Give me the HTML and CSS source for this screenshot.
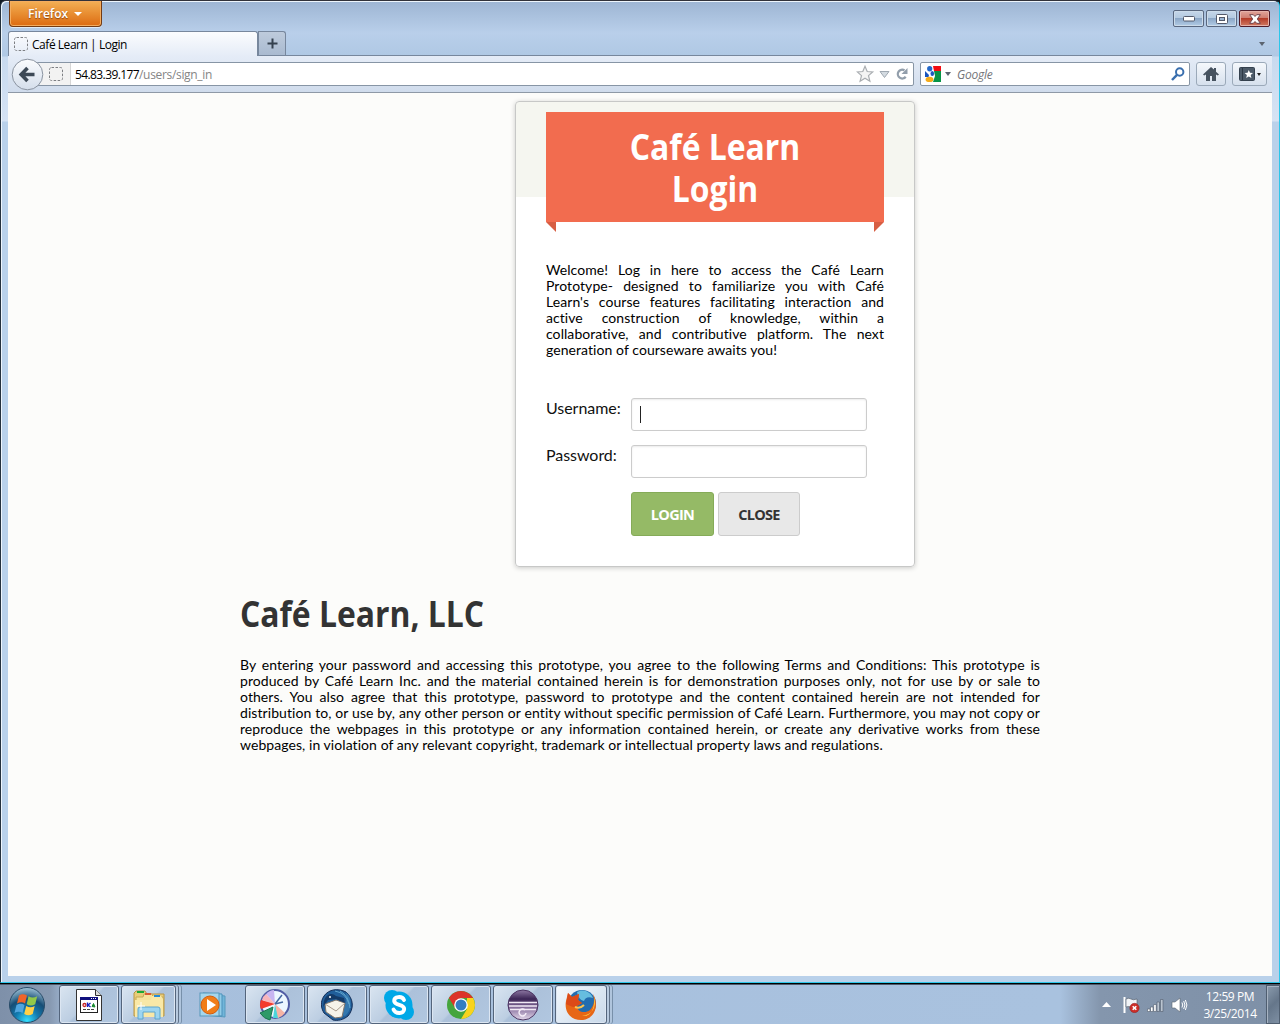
FILE: index.html
```html
<!DOCTYPE html>
<html lang="en">
<head>
<meta charset="utf-8">
<title>Café Learn | Login</title>
<link rel="stylesheet" href="styles.css">
</head>
<body>
<div class="window">
  <header class="titlebar">
    <div class="app-menu">Firefox<i class="caret light"></i></div>
    <div class="controls">
      <div class="control"><svg width="12" height="6" viewBox="0 0 12 6"><rect x=".5" y=".5" width="11" height="4.500" rx="1" fill="#fff" stroke="#53596a"/></svg></div>
      <div class="control"><svg width="12" height="10" viewBox="0 0 12 10"><rect x=".5" y=".5" width="11" height="9" rx="1" fill="#fff" stroke="#53596a"/><rect x="3.500" y="3.500" width="5" height="3" fill="#9cb6d4" stroke="#53596a"/></svg></div>
      <div class="control close"><svg width="12" height="10" viewBox="0 0 12 10"><path d="M.7.700h3.600L6 2.500 7.700.700h3.600L8.300 5l3 4.300H7.700L6 7.500 4.300 9.300H.7l3-4.300z" fill="#fff" stroke="#633a45" stroke-width=".9"/></svg></div>
    </div>
  </header>
  <div class="tabs">
    <div class="tab"><svg width="14" height="14" viewBox="0 0 14 14"><rect x=".5" y=".5" width="13" height="13" rx="2" fill="none" stroke="#7d7f83" stroke-dasharray="2.500 1.500"/></svg><span>Café Learn | Login</span></div>
    <div class="new-tab"><svg width="11" height="11" viewBox="0 0 11 11"><path d="M5.500 .5v10M.5 5.500h10" stroke="#35414f" stroke-width="2"/></svg></div>
    <i class="caret all-tabs"></i>
  </div>
  <nav class="toolbar">
    <svg class="back" width="33" height="33" viewBox="0 0 33 33"><defs><linearGradient id="bk" x2="0" y2="1"><stop stop-color="#fbfcfe"/><stop offset="1" stop-color="#d4deeb"/></linearGradient></defs><circle cx="16.500" cy="16.500" r="15.300" fill="url(#bk)" stroke="#8a93a0"/><path d="M16.500 10l-6.300 6.500 6.300 6.500M11 16.500h12.500" fill="none" stroke="#3d4956" stroke-width="3.600"/></svg>
    <div class="urlbar">
      <div class="identity"><svg width="14" height="14" viewBox="0 0 14 14"><rect x=".5" y=".5" width="13" height="13" rx="2" fill="none" stroke="#7d7f83" stroke-dasharray="2.500 1.500"/></svg></div>
      <div class="url">54.83.39.177<span>/users/sign_in</span></div>
      <svg width="56" height="18" viewBox="0 0 56 18"><path d="M9 1.300l2.200 5.200 5.500.4-4.200 3.700 1.400 5.600L9 13.200l-4.900 3 1.400-5.600L1.300 6.900l5.500-.4z" fill="#f4f4f4" stroke="#a9adb1" stroke-width="1.200"/><path d="M24 6.500h9l-4.500 6z" fill="#d4dbe1" stroke="#a0a9b2"/><path d="M48.500 5.300a4.400 4.400 0 1 0 1.200 6.500" fill="none" stroke="#929eab" stroke-width="2.300"/><path d="M51.500 3v6h-6z" fill="#929eab"/></svg>
    </div>
    <div class="search">
      <svg width="16" height="16" viewBox="0 0 16 16"><path d="M8 0h8v5H9z" fill="#f20d13"/><path d="M9 5h7v11H8l2-6z" fill="#079447"/><path d="M0 5h7l2 6H0z" fill="#fff"/><ellipse cx="4.700" cy="2.700" rx="2.600" ry="2.700" fill="#2368ca"/><path d="M0 5l4 4-.5 2H0z" fill="#1955bd"/><ellipse cx="7.300" cy="7.500" rx="1.800" ry="2.500" fill="#1a56c1"/><ellipse cx="4.500" cy="13.400" rx="3.900" ry="2.600" fill="#f5ab19"/></svg>
      <i class="caret"></i><span>Google</span>
      <svg width="14" height="14" viewBox="0 0 14 14"><circle cx="8.700" cy="5" r="3.700" fill="#fff" stroke="#3a6fae" stroke-width="2"/><path d="M6 7.800L1 13" stroke="#3a6fae" stroke-width="2.500"/></svg>
    </div>
    <div class="tool home"><svg width="16" height="14" viewBox="0 0 16 14"><path d="M8 0L0 7.500l1.200 1L3 7.500V14h4V9h2v5h4V7.500l1.800 1 1.200-1-3-2.800V1h-2v1.600z" fill="#46525f"/></svg></div>
    <div class="tool marks"><svg width="16" height="14" viewBox="0 0 16 14"><rect x=".5" y=".5" width="15" height="13" rx="1" fill="#4c5a68" stroke="#35414e"/><path d="M3.500 1v12" stroke="#2d3945"/><path d="M9.800 3l1.200 2.700 3 .3-2.300 2 .7 3-2.600-1.600L7.200 11l.7-3-2.300-2 3-.3z" fill="#fff"/></svg><i class="caret tiny"></i></div>
  </nav>
  <main class="page">
    <section class="card">
      <div class="card-top"><h1><span>Café Learn</span><span>Login</span></h1></div>
      <p class="copy intro"><span>Welcome! Log in here to access the Café Learn</span> <span>Prototype- designed to familiarize you with Café</span> <span>Learn's course features facilitating interaction and</span> <span>active construction of knowledge, within a</span> <span>collaborative, and contributive platform. The next</span> <span class="last">generation of courseware awaits you!</span></p>
      <form class="form">
        <label>Username:</label><div class="field"><i class="cursor"></i></div>
        <label>Password:</label><div class="field"></div>
        <div class="actions"><div class="btn login">LOGIN</div><div class="btn cancel">CLOSE</div></div>
      </form>
    </section>
    <section class="terms">
      <h2>Café Learn, LLC</h2>
      <p class="copy"><span>By entering your password and accessing this prototype, you agree to the following Terms and Conditions: This prototype is</span> <span>produced by Café Learn Inc. and the material contained herein is for demonstration purposes only, not for use by or sale to</span> <span>others. You also agree that this prototype, password to prototype and the content contained herein are not intended for</span> <span>distribution to, or use by, any other person or entity without specific permission of Café Learn. Furthermore, you may not copy or</span> <span>reproduce the webpages in this prototype or any information contained herein, or create any derivative works from these</span> <span class="last">webpages, in violation of any relevant copyright, trademark or intellectual property laws and regulations.</span></p>
    </section>
  </main>
</div>
<footer class="taskbar">
  <div class="start"><svg width="38" height="38" viewBox="0 0 38 38"><defs><radialGradient id="orb" cy=".95" r=".95"><stop stop-color="#35e0ff"/><stop offset=".35" stop-color="#127bb0"/><stop offset=".65" stop-color="#164d75"/><stop offset="1" stop-color="#a2c4d8"/></radialGradient></defs><circle cx="19" cy="19" r="17.500" fill="url(#orb)" stroke="#284b68"/><path d="M11 9.500c3-2 5.500-1.500 8 0l-2 8c-2.500-1.700-5-1.700-8 0z" fill="#ef6428"/><path d="M20.500 10.300c3 1.700 5.500 1.700 8.700 0l-2 8c-3 1.800-5.700 1.700-8.500 0z" fill="#92c849"/><path d="M8.500 19c3-1.700 5.500-1.600 8 0l-2 8c-2.500-1.700-5-1.700-8 0z" fill="#50a5de"/><path d="M18.200 20c3 1.600 5.500 1.600 8.500 0l-2 8c-3 1.700-5.500 1.600-8.500 0z" fill="#ffd046"/></svg></div>
  <div class="task"><svg width="28" height="34" viewBox="0 0 28 34"><path d="M1.500 1.500h19l6 6v25h-25z" fill="#fff" stroke="#333"/><path d="M20.500 1.500v6h6" fill="#ddd" stroke="#333"/><rect x="5.500" y="9.500" width="17" height="15" fill="#fff" stroke="#222"/><path d="M5 9h18v3H5z" fill="#10107e"/><path d="M16 10.500h6" stroke="#fff" stroke-dasharray="1 1"/><circle cx="9.500" cy="17" r="1.500" fill="none" stroke="#c52727" stroke-width="1.300"/><path d="M12.500 14.500v4.500M15.500 15l-2.500 2 2.500 2" fill="none" stroke="#1421c3" stroke-width="1.300"/><path d="M17 18.500l1.500-3 1.500 3.500z" fill="#198b32" stroke="#198b32"/><path d="M8 21.500h12" stroke="#444" stroke-dasharray="3 1"/></svg></div>
  <div class="task w55 stacked"><svg width="34" height="32" viewBox="0 0 34 32"><path d="M2 4l2-2h9l2 3h17v22H2z" fill="#e9cd79" stroke="#b89544"/><path d="M5 2h7v2H5z" fill="#19a834"/><path d="M12 5h8l1 3h10v19H4V8h7z" fill="#f6e39c" stroke="#c7a956"/><path d="M13 4h6v2h-6z" fill="#db5933"/><path d="M20 7h9l2 3v18H3V11h16z" fill="#f9e8a7"/><path d="M22 6h6v2h-6z" fill="#258bd7"/><path d="M6 30V20q0-2 2-2h18q2 0 2 2v10h-5v-7H11v7z" fill="#9dd5f0" stroke="#5da6cf"/><path d="M9 13v8M5 17h8" stroke="#fff"/></svg></div>
  <div class="task plain"><svg width="30" height="28" viewBox="0 0 30 28"><path d="M8 3l19 2v21L8 24z" fill="#72b5d9" stroke="#579abd"/><path d="M5 2l19 1v22L5 24z" fill="#91cce7" stroke="#4b91bb"/><rect x="2" y="2" width="19" height="23" fill="#a5d6eb" stroke="#5797ba"/><circle cx="12" cy="14" r="9" fill="#f17d17" stroke="#d35c0e"/><path d="M9 8l9 6-9 6z" fill="#fff"/></svg></div>
  <div class="task"><svg width="32" height="32" viewBox="0 0 32 32"><circle cx="16" cy="15" r="14" fill="#edf7ff" stroke="#515da5" stroke-width="2"/><path d="M16 15L7 5q4-4 8-4z" fill="#c8b5f1"/><path d="M16 15L3 11q1-4 4-6z" fill="#f7b5bb"/><path d="M16 15L2 20q-2-4 0-9z" fill="#f33b2c"/><path d="M14 18L1 24q4 6 10 7z" fill="#2d9a68" stroke="#1b7551"/><path d="M16 15l-2 14h6z" fill="#4bd5db"/><path d="M16 15l3 14q5-2 7-5z" fill="#f6b4a5"/><path d="M16 15l7-9M16 15l8-2" stroke="#4468a1" stroke-width="1.500"/></svg></div>
  <div class="task"><svg width="32" height="32" viewBox="0 0 32 32"><path d="M3 7C8 0 17-1 25 3c8 7 8 17 2 24-5 4-10 5-15 4L3 24C0 19-1 13 3 7z" fill="#205e9a" stroke="#142e57"/><path d="M25 3c7 7 6 18-1 24l-6-2c7-5 8-15 7-22z" fill="#3377ae"/><path d="M4 15l11-4 9 3-3 14-7 1-9-6z" fill="#f5f3e9" stroke="#81766b"/><path d="M4 15l11 7 9-8" fill="none" stroke="#a79b8c"/><path d="M3 12C5 5 11 3 15 7l8 2 1 5-9-4-8 1-5 7z" fill="#143b68"/><path d="M14 2q11 2 14 13M19 2q9 5 10 17" stroke="#5fa4cd" fill="none"/><circle cx="9" cy="8" r="1" fill="#fff"/></svg></div>
  <div class="task"><svg width="32" height="32" viewBox="0 0 32 32"><circle cx="16" cy="16" r="13.500" fill="#00a8e7"/><circle cx="9" cy="9" r="8" fill="#00a8e7"/><circle cx="23" cy="23" r="8" fill="#00a8e7"/><path d="M21 11C19 6.500 11 7.500 11.200 12c.5 5 10 2.800 10 8 0 5-8.500 5.500-10.700.5" fill="none" stroke="#fff" stroke-width="3.900" stroke-linecap="round"/></svg></div>
  <div class="task"><svg width="30" height="30" viewBox="0 0 30 30"><circle cx="15" cy="15" r="14" fill="#45a53d"/><path d="M2.900 8A14 14 0 0 1 27.100 8H15l-6 10z" fill="#dc3429"/><path d="M27.100 8A14 14 0 0 1 15 29l6-10V8z" fill="#f9d31d"/><circle cx="15" cy="15" r="6.800" fill="#fff"/><circle cx="15" cy="15" r="5.500" fill="#347dc1"/></svg></div>
  <div class="task"><svg width="32" height="32" viewBox="0 0 32 32"><defs><linearGradient id="ec" x2="0" y2="1"><stop stop-color="#8e78a3"/><stop offset=".3" stop-color="#3b2555"/><stop offset=".55" stop-color="#7d6495"/><stop offset="1" stop-color="#e4d9eb"/></linearGradient></defs><circle cx="16" cy="16" r="15" fill="url(#ec)" stroke="#4b3462"/><path d="M2 13.500h28M2 17h28M3 20.500h26" stroke="#f1e9f5" stroke-width="1.300"/><path d="M19 24a3.500 3.500 0 1 1-1-3" fill="none" stroke="#f5edf8" stroke-width="1.500"/></svg></div>
  <div class="task w52 stacked active"><svg width="32" height="32" viewBox="0 0 32 32"><circle cx="17" cy="15" r="14" fill="#236caf"/><path d="M12 3c6-4 14 0 16 6-5-2-8 0-9 3-4-1-6-4-7-9z" fill="#66bddf"/><path d="M28 5c6 10 3 24-10 26C5 32-1 22 1 12l2-8 4 4 7-3-1 6 4 3-5 3c0 6 8 8 13 4 4-4 5-9 3-16z" fill="#e76616"/><path d="M29 8c3 10-2 18-12 19 10 1 13-9 12-19z" fill="#ffd54b"/><path d="M3 4l4 4 7-3-1 6 4 3-5 3-4 1-5-2-2-1z" fill="#dc4a18"/><path d="M10 18q5 2 9-2" stroke="#ffc34a" stroke-width="2" fill="none"/></svg></div>
  <div class="tray">
    <svg width="9" height="5" viewBox="0 0 9 5"><path d="M4.500 0L9 5H0z" fill="#fff"/></svg>
    <svg width="17" height="17" viewBox="0 0 17 17"><path d="M1.500 1v16" stroke="#fff" stroke-width="2"/><path d="M3 3q3-1.500 5 0t6 0v8q-3 1-6 0t-5 0z" fill="#f0f3f7" stroke="#4d5764" stroke-width=".6"/><circle cx="11.500" cy="12" r="4.700" fill="#cc2d28" stroke="#8c2023" stroke-width=".5"/><path d="M9.700 10.200l3.600 3.600M13.300 10.200l-3.600 3.600" stroke="#fff" stroke-width="1.600"/></svg>
    <svg width="17" height="14" viewBox="0 0 17 14"><g fill="#fff" stroke="#515d6b" stroke-width=".6"><path d="M.5 11h2.500v2.500H.5zM3.500 9H6v4.500H3.500zM6.700 6.500h2.500v7H6.700z"/><path d="M10 4h2.500v9.500H10zM13.500 1.500H16v12h-2.500z" fill="#b9c4d0"/></g></svg>
    <svg width="17" height="16" viewBox="0 0 17 16"><path d="M1 5h3l5-4v14l-5-4H1z" fill="#fff" stroke="#5c6570" stroke-width=".6"/><path d="M11 5.500q1.500 2.500 0 5M12.700 4q2.500 4 0 8M14.400 3q3 5 0 10" fill="none" stroke="#fff" stroke-width="1"/></svg>
    <div class="clock"><span>12:59 PM</span><span>3/25/2014</span></div>
    <div class="desktop"></div>
  </div>
</footer>
</body>
</html>
```
FILE: styles.css
```css
* { box-sizing: border-box; }
body { margin: 0; width: 1280px; height: 1024px; overflow: hidden; background: #101820; font: 12px "Open Sans", sans-serif; }
svg { display: block; flex: none; }
.window { height: 983px; display: flex; flex-direction: column; padding: 0 7px 6px; border: 1px solid #31323a; border-right-color: #2cc6ea; border-bottom-color: #2cc6ea; border-left-color: #24303c; border-radius: 6px 6px 0 0; background: linear-gradient(#9db5d3, #b9cfea 32px, #afc8e4 55px, #c8daef 56px, #d5e3f4 120px, #b9d1ea 121px); box-shadow: inset 1px 1px #edf5fc; }
.titlebar { height: 30px; flex: none; display: flex; justify-content: space-between; padding: 0 2px 0 1px; }
.app-menu { width: 93px; height: 26px; border: 1px solid #733b14; border-top: 0; border-radius: 0 0 4px 4px; background: linear-gradient(#f3b056, #e88e32 50%, #dc6b12); box-shadow: inset 0 0 0 1px #f4ad60, 0 1px #dfeaf6; color: #fff; font-size: 12px; font-weight: 600; line-height: 24px; padding-left: 18px; text-shadow: 0 1px 1px #8b4510; display: flex; align-items: center; }
.caret { flex: none; border: 3px solid transparent; border-top: 4px solid #5b6470; border-bottom: 0; }
.caret.light { border-width: 4px 4px 0; border-top-color: #fff; margin-left: 6px; }
.caret.tiny { border-width: 3px 2px 0; border-top-color: #222; }
.controls { display: flex; gap: 2px; padding-top: 9px; }
.control { width: 31px; height: 17px; display: flex; align-items: center; justify-content: center; border: 1px solid #59677f; border-radius: 2px; background: linear-gradient(#c5d6e9, #b3c9e0 47%, #8ba6c6 49%, #b2cce6); box-shadow: inset 0 0 0 1px #ccdbea; }
.control.close { border-color: #501c29; background: linear-gradient(#e1a59b, #cf7d70 47%, #b43b28 49%, #d07a62); box-shadow: inset 0 0 0 1px #e5b1a9; }
.tabs { height: 25px; flex: none; display: flex; align-items: flex-start; border-bottom: 1px solid #77879d; }
.tab { width: 250px; height: 25px; display: flex; align-items: center; gap: 4px; padding: 1px 5px 0; border: 1px solid #77879d; border-bottom: 0; border-radius: 3px 3px 0 0; background: linear-gradient(#fbfcfe, #e5ecf7); color: #000; letter-spacing: -.46px; }
.tab svg { margin-top: -1px; }
.new-tab { width: 28px; height: 24px; display: flex; align-items: center; justify-content: center; border: 1px solid #77879d; border-bottom: 0; border-radius: 0 3px 0 0; background: linear-gradient(#becbdc, #a9bad0); }
.all-tabs { margin: 11px 7px 0 auto; }
.toolbar { height: 37px; flex: none; display: flex; align-items: center; padding: 0 5px 0 3px; border-bottom: 1px solid #8e99a6; background: linear-gradient(#e5ecf7, #d0dcec); }
.back { position: relative; z-index: 1; }
.urlbar { width: 878px; height: 24px; margin-left: -8px; display: flex; align-items: center; border: 1px solid #8795a5; border-radius: 2px; background: #fff; padding-right: 1px; }
.identity { width: 34px; height: 22px; display: flex; align-items: center; justify-content: flex-end; padding-right: 7px; border-right: 1px solid #d6d6d6; background: #f2f2f2; }
.url { flex: 1; padding: 1px 0 0 4px; letter-spacing: -.6px; color: #000; }
.url span { color: #858585; letter-spacing: -.32px; }
.search { width: 270px; height: 24px; margin-left: 6px; padding: 0 4px 0 4px; display: flex; align-items: center; border: 1px solid #8795a5; border-radius: 2px; background: #fff; }
.search .caret { margin-left: 4px; }
.search span { flex: 1; padding: 1px 0 0 6px; color: #74757a; font-style: italic; letter-spacing: -.25px; }
.tool { height: 24px; display: flex; align-items: center; justify-content: center; gap: 2px; border: 1px solid #9ba9b9; border-radius: 3px; background: linear-gradient(#f5f8fc, #d6e0ed); }
.home { width: 30px; margin-left: 6px; }
.marks { width: 35px; margin-left: 6px; }
.page { flex: 1; overflow: hidden; background: #fcfcfa; padding: 8px 0 0 232px; }
.card { width: 400px; height: 466px; margin-left: 275px; border: 1px solid #c7c8c7; border-radius: 4px; background: linear-gradient(#f5f6f0 95px, #fff 95px); box-shadow: 0 1px 5px #0003; }
.card-top { padding: 10px 30px 0; }
h1, h2 { margin: 0; font-family: "Open Sans", sans-serif; font-weight: 700; }
h1 { position: relative; height: 110px; padding-top: 14px; background: #f26c4f; color: #fff; font-size: 35px; line-height: 42px; text-align: center; }
h1 span { display: block; transform: scaleX(.91); }
h1::before, h1::after { content: ""; position: absolute; top: 110px; width: 10px; height: 10px; background: #d75e43; }
h1::before { left: 0; clip-path: polygon(0 0, 100% 0, 100% 100%); }
h1::after { right: 0; clip-path: polygon(0 0, 100% 0, 0 100%); }
.copy { margin: 0; font: 14px/16px Lato, sans-serif; color: #000; letter-spacing: .065px; font-variant-ligatures: none; }
.copy span { display: block; white-space: nowrap; text-align: justify; text-align-last: justify; }
.copy .last { text-align-last: left; }
.intro { margin: 40px 30px 0; }
.form { display: grid; grid-template-columns: 85px 236px; row-gap: 14px; margin: 40px 30px 0; }
.form label { font: 16px/20px Lato, sans-serif; color: #111; letter-spacing: -.05px; }
.field { height: 33px; padding: 7px 8px; border: 1px solid #ccc; border-radius: 3px; background: #fff; box-shadow: inset 0 1px 2px #00000015; }
.cursor { display: block; width: 1px; height: 17px; background: #222; }
.actions { grid-column: 2; display: flex; gap: 4px; }
.btn { height: 44px; width: 83px; border: 1px solid #85ab58; border-radius: 3px; background: #95ba66; color: #fff; font-size: 14.500px; font-weight: 700; letter-spacing: -.7px; line-height: 43px; text-align: center; }
.btn.cancel { width: 82px; border-color: #ccc; background: #e8e8e8; color: #333; }
.terms { width: 800px; padding-top: 26px; }
h2 { height: 64px; color: #333; font-size: 35px; line-height: 42px; white-space: nowrap; transform: scaleX(.91); transform-origin: left; }
.taskbar { height: 41px; display: flex; padding-top: 1px; border-top: 1px solid #000; background: linear-gradient(90deg, #7e90a9, #8799b1 50px, #a7bfdc 70px, #a9c2df 1060px, #8496ad 1100px, #7e90a7); box-shadow: inset 0 1px #4d596a; }
.start { width: 59px; padding: 1px 0 0 8px; flex: none; }
.task { flex: none; width: 60px; height: 39px; margin-right: 2px; display: flex; align-items: center; justify-content: center; border: 1px solid #54657c; border-radius: 3px; background: linear-gradient(135deg, #dae5f1, #bccee2 46%, #acc1da 49%, #b1c7e0); box-shadow: inset 0 0 0 1px #dce6f2; }
.task.w55 { width: 55px; }
.task.w52 { width: 52px; }
.task.stacked { margin-right: 7px; box-shadow: inset 0 0 0 1px #dce6f2, 2px 0 #b8cadf, 3px 0 #61738a, 5px 0 #b0c5dd, 6px 0 #7890aa; }
.task.plain { border-color: transparent; background: none; box-shadow: none; }
.task.active { background: linear-gradient(135deg, #f4f8fc, #dce7f2 55%, #c8d8e9); }
.tray { margin-left: auto; display: flex; align-items: center; color: #fff; }
.tray svg { margin-right: 7px; }
.tray svg:first-child { margin-right: 12px; }
.clock { width: 70px; margin-right: 1px; display: flex; flex-direction: column; align-items: center; line-height: 17px; letter-spacing: -.4px; }
.desktop { width: 14px; height: 39px; border: 1px solid #4f5e70; box-shadow: inset 1px 1px #a7b3c2; background: linear-gradient(135deg, #8b9bad, #65768a 50%, #7e8fa3); }
```
